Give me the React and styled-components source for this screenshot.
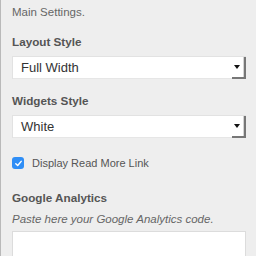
import React from "react";
import styled, { createGlobalStyle } from "styled-components";

const Global = createGlobalStyle`
  html, body {
    margin: 0;
    padding: 0;
    background: #eeeeee;
  }
  #root {
    width: 256px;
    height: 256px;
    overflow: hidden;
  }
`;

const Panel = styled.div`
  height: 256px;
  box-sizing: border-box;
  border-left: 1px solid #b9b9b9;
  padding: 4px 10px 0 11px;
  font-family: "Liberation Sans", Arial, sans-serif;
  color: #555;
`;

const Description = styled.div`
  font-size: 11.5px;
  line-height: 16px;
  color: #666;
  font-style: ${(p) => (p.italic ? "italic" : "normal")};
  margin-top: ${(p) => p.top || 0}px;
`;

const Label = styled.div`
  font-size: 11.7px;
  font-weight: bold;
  line-height: 16px;
  color: #555;
  margin-top: ${(p) => p.top}px;
`;

const SelectBox = styled.div`
  margin-top: ${(p) => p.top}px;
  height: 23px;
  box-sizing: border-box;
  display: flex;
  align-items: stretch;
  background: #fff;
  border-top: 1px solid #e2e2e2;
  border-left: 1px solid #e2e2e2;
`;

const SelectValue = styled.div`
  flex: 1;
  padding-left: 8px;
  display: flex;
  align-items: center;
  font-size: 13px;
  color: #333;
  border-bottom: 1px solid #e6e6e6;
`;

const ArrowButton = styled.div`
  width: 11px;
  display: flex;
  align-items: center;
  padding-left: 1px;
  border-right: 2px solid #777;
  border-bottom: 2px solid #777;
  box-shadow: inset -1px 0 0 #d4d4d4;
  background: #fff;
`;

const Triangle = styled.span`
  width: 0;
  height: 0;
  border-left: 3px solid transparent;
  border-right: 3px solid transparent;
  border-top: 4px solid #111;
  margin-left: 1px;
`;

const CheckRow = styled.label`
  margin-top: 17px;
  display: flex;
  align-items: center;
  gap: 8px;
  height: 16px;
  font-size: 11px;
  color: #555;
`;

const CheckBox = styled.span`
  width: 12px;
  height: 12px;
  border-radius: 3px;
  background: #2f8ef6;
  display: flex;
  align-items: center;
  justify-content: center;
`;

const TextArea = styled.div`
  margin-top: 4px;
  height: 40px;
  background: #fff;
  border: 1px solid #dcdcdc;
`;

function Select({ top, value }) {
  return (
    <SelectBox top={top}>
      <SelectValue>{value}</SelectValue>
      <ArrowButton>
        <Triangle />
      </ArrowButton>
    </SelectBox>
  );
}

export default function App() {
  return (
    <>
      <Global />
      <Panel>
        <Description>Main Settings.</Description>
        <Label top={14}>Layout Style</Label>
        <Select top={6} value="Full Width" />
        <Label top={14}>Widgets Style</Label>
        <Select top={6} value="White" />
        <CheckRow>
          <CheckBox>
            <svg width="9" height="9" viewBox="0 0 10 10">
              <path d="M2 5.2 L4.1 7.3 L8 2.6" fill="none" stroke="#fff" strokeWidth="1.6" strokeLinecap="round" strokeLinejoin="round" />
            </svg>
          </CheckBox>
          Display Read More Link
        </CheckRow>
        <Label top={19}>Google Analytics</Label>
        <Description italic top={5}>Paste here your Google Analytics code.</Description>
        <TextArea />
      </Panel>
    </>
  );
}
